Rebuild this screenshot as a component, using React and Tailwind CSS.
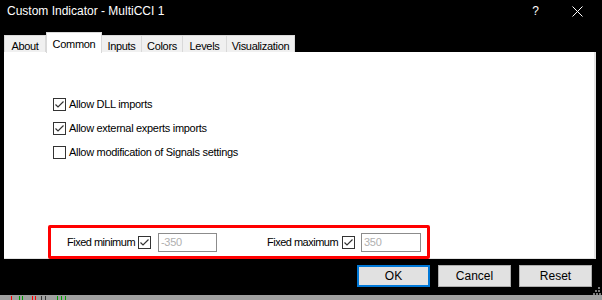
import React from "react";

function Check({ checked }) {
  return (
    <svg width="13" height="13" viewBox="0 0 13 13" className="shrink-0 block">
      <rect x="0.5" y="0.5" width="12" height="12" fill="#ffffff" stroke="#333333" strokeWidth="1" />
      {checked && (
        <polyline points="2.5,6.5 5,9 10.5,3.5" fill="none" stroke="#333333" strokeWidth="1.2" />
      )}
    </svg>
  );
}

const tabs = [
  { name: "About", w: 42 },
  { name: "Common", w: 56, active: true },
  { name: "Inputs", w: 40 },
  { name: "Colors", w: 41 },
  { name: "Levels", w: 44 },
  { name: "Visualization", w: 68 },
];

const ui = { fontFamily: '"Liberation Sans", Arial, sans-serif' };

export default function App() {
  return (
    <div className="w-[602px] h-[300px] bg-black flex flex-col overflow-hidden select-none" style={ui}>
      {/* title bar */}
      <div className="h-[30px] flex items-start shrink-0">
        <div className="pl-[7px] pt-[3px] text-white text-[12px] leading-[16px]">Custom Indicator - MultiCCI 1</div>
        <div className="ml-auto flex items-start pt-[3px]">
          <div className="text-white text-[12px] leading-[16px] mr-[33px]">?</div>
          <svg width="11" height="11" viewBox="0 0 11 11" className="mt-[3px] mr-[19px]">
            <path d="M0.5 0.5 L10.5 10.5 M10.5 0.5 L0.5 10.5" stroke="#ffffff" strokeWidth="1" />
          </svg>
        </div>
      </div>

      {/* tabs */}
      <div className="h-[22px] flex items-end pl-[4px] shrink-0 text-[11px] tracking-[-0.3px] text-black">
        {tabs.map((t) =>
          t.active ? (
            <div
              key={t.name}
              className="h-[21px] bg-white border border-b-0 border-[#d9d9d9] flex items-start justify-center pt-[3px] -mb-[1px] relative z-10"
              style={{ width: t.w }}
            >
              {t.name}
            </div>
          ) : (
            <div
              key={t.name}
              className="h-[17px] bg-[#f0f0f0] border border-b-0 border-l-0 first:border-l border-[#d9d9d9] flex items-start justify-center pt-[2px]"
              style={{ width: t.w }}
            >
              {t.name}
            </div>
          )
        )}
      </div>

      {/* panel */}
      <div className="ml-[4px] w-[592px] h-[207px] bg-white border-r-2 border-b border-[#e3e3e3] relative shrink-0 flex flex-col text-[11px] tracking-[-0.3px] text-black">
        <div className="pt-[46px] pl-[49px] flex flex-col gap-[11px]">
          <div className="flex items-center gap-[3px] h-[13px]">
            <Check checked />
            <span>Allow DLL imports</span>
          </div>
          <div className="flex items-center gap-[3px] h-[13px]">
            <Check checked />
            <span>Allow external experts imports</span>
          </div>
          <div className="flex items-center gap-[3px] h-[13px]">
            <Check />
            <span>Allow modification of Signals settings</span>
          </div>
        </div>

        <div className="mt-auto mb-[6px] ml-[63px] flex items-center h-[19px]">
          <span className="w-[71px] whitespace-nowrap tracking-[-0.5px]">Fixed minimum</span>
          <Check checked />
          <div className="ml-[7px] w-[59px] h-[19px] border border-[#8c8c8c] flex items-center pl-[2px] text-[#b0b0b0]">-350</div>
          <span className="ml-[50px] w-[75px] whitespace-nowrap tracking-[-0.5px]">Fixed maximum</span>
          <Check checked />
          <div className="ml-[6px] w-[60px] h-[19px] border border-[#8c8c8c] flex items-center pl-[2px] text-[#b0b0b0]">350</div>
        </div>

        {/* highlight annotation overlay */}
        <div className="absolute left-[44px] top-[173px] w-[382px] h-[34px] border-[3px] border-[#ff0000] rounded-[2px] pointer-events-none" />
      </div>

      {/* buttons */}
      <div className="mt-[6px] h-[22px] flex gap-[8px] pl-[357px] shrink-0 text-[12px] text-black">
        <div className="w-[73px] h-[22px] bg-[#e1e1e1] border-2 border-[#0078d7] flex items-center justify-center">OK</div>
        <div className="w-[73px] h-[22px] bg-[#e1e1e1] border border-[#adadad] flex items-center justify-center">Cancel</div>
        <div className="w-[73px] h-[22px] bg-[#e1e1e1] border border-[#adadad] flex items-center justify-center">Reset</div>
      </div>

      {/* grip */}
      <div className="flex-1 flex justify-end items-start pr-[1px]">
        <svg width="8" height="8" viewBox="0 0 8 8" className="block">
          <rect x="5" y="0" width="2" height="2" fill="#7a7a7a" />
          <rect x="2" y="3" width="2" height="2" fill="#7a7a7a" />
          <rect x="5" y="3" width="2" height="2" fill="#7a7a7a" />
          <rect x="0" y="6" width="2" height="2" fill="#7a7a7a" />
          <rect x="3" y="6" width="2" height="2" fill="#7a7a7a" />
          <rect x="6" y="6" width="2" height="2" fill="#7a7a7a" />
        </svg>
      </div>

      {/* status strip */}
      <div className="h-[5px] bg-[#a0a0a0] shrink-0 flex items-end">
        <div className="ml-[11px] w-[1px] h-[4px] bg-[#ff0000]" />
        <div className="ml-[7px] w-[1px] h-[4px] bg-[#00a000]" />
        <div className="ml-[2px] w-[1px] h-[4px] bg-[#00a000]" />
        <div className="ml-[9px] w-[1px] h-[4px] bg-[#ff0000]" />
        <div className="ml-[2px] w-[1px] h-[4px] bg-[#ff0000]" />
        <div className="ml-[5px] w-[1px] h-[4px] bg-[#333333]" />
        <div className="ml-[3px] w-[1px] h-[4px] bg-[#333333]" />
        <div className="ml-[11px] w-[1px] h-[4px] bg-[#00a000]" />
        <div className="ml-[3px] w-[1px] h-[4px] bg-[#00a000]" />
        <div className="ml-[3px] w-[1px] h-[4px] bg-[#00a000]" />
      </div>
    </div>
  );
}
